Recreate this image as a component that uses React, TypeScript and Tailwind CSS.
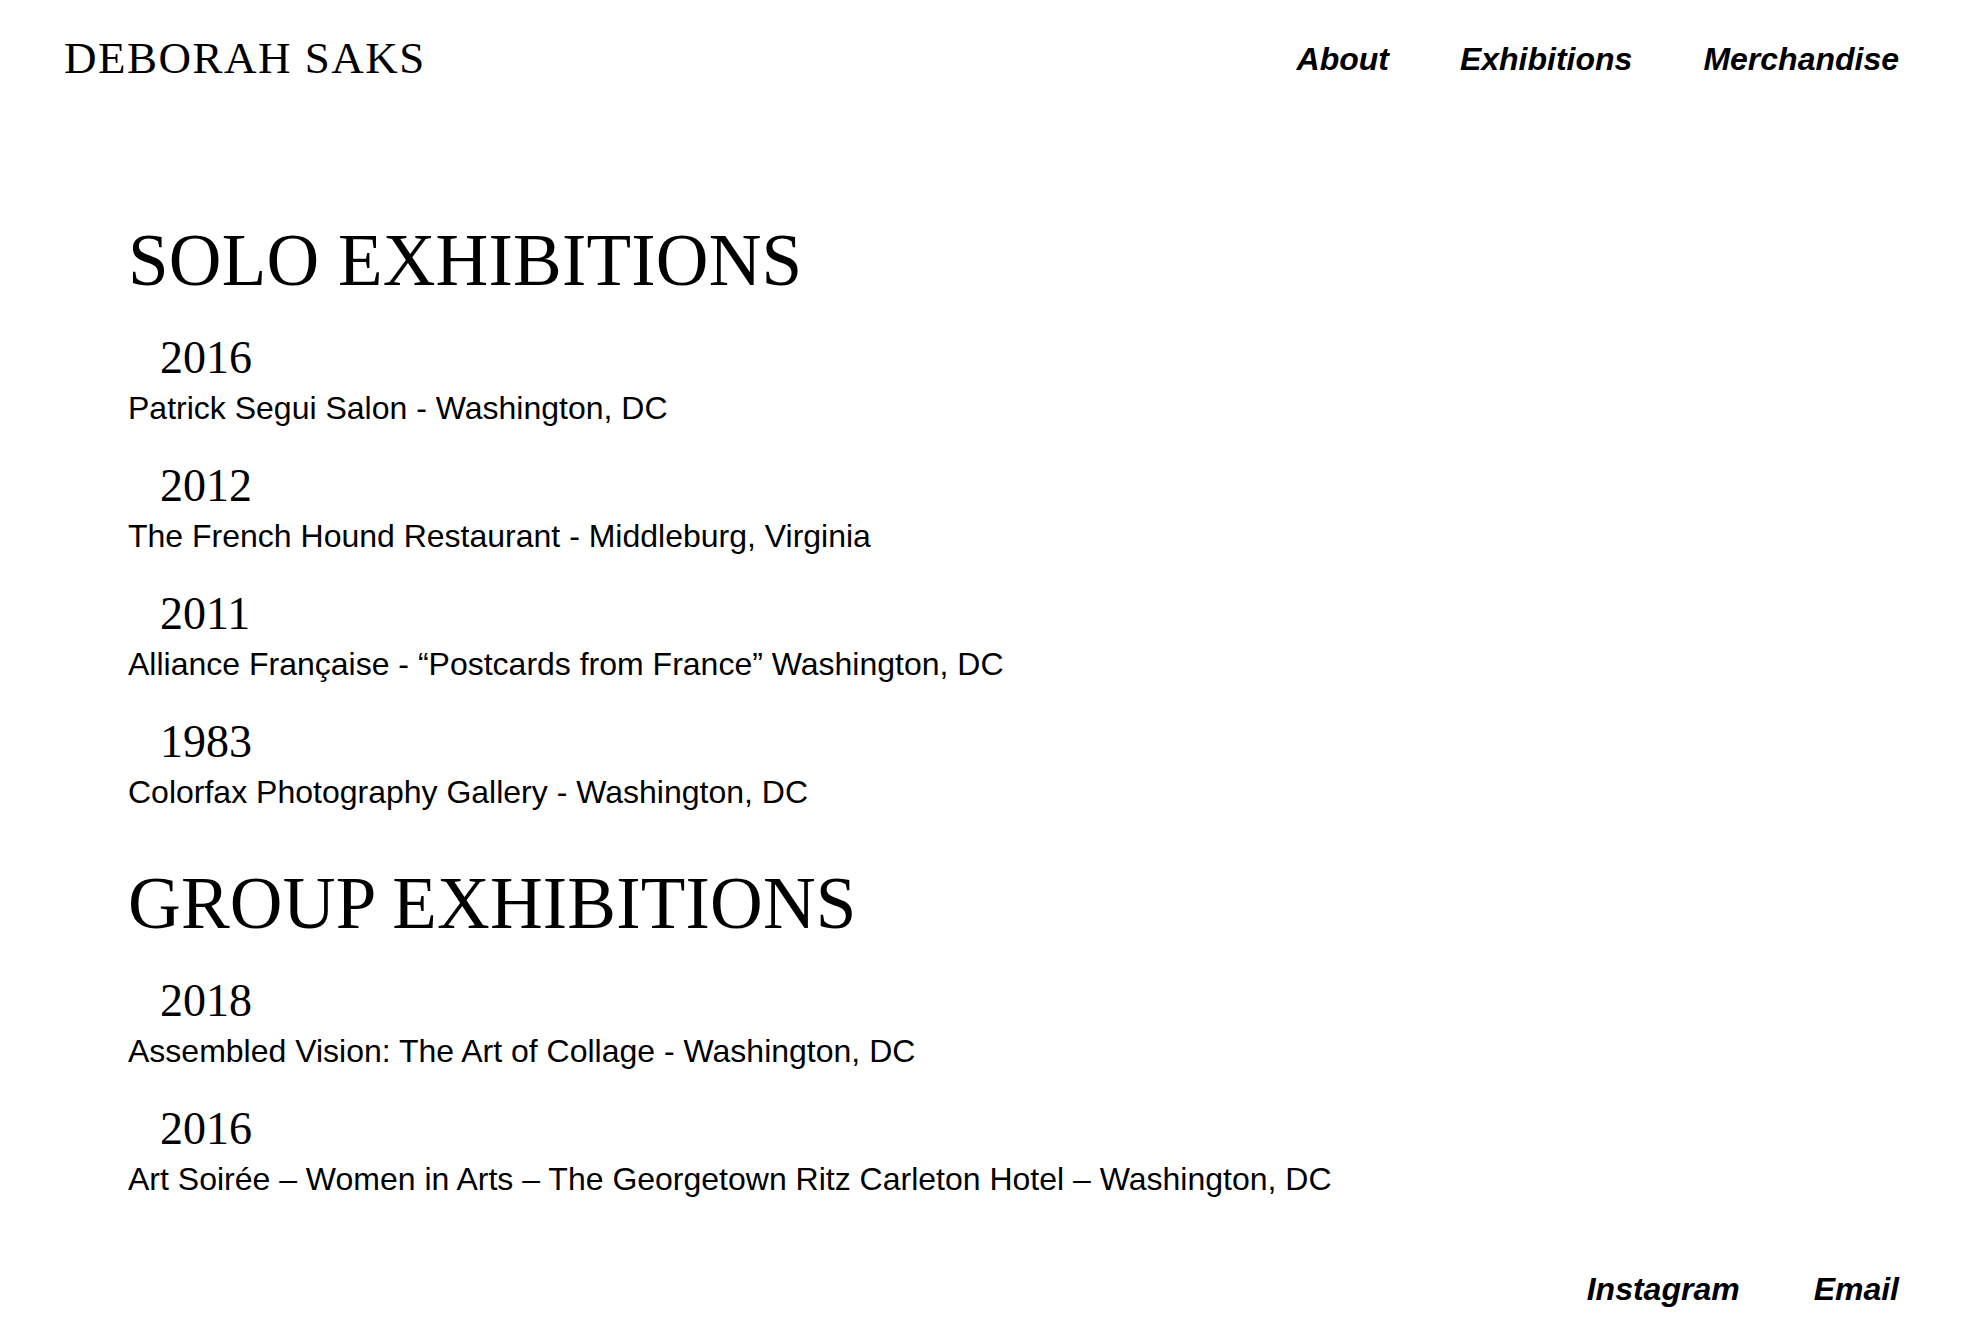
const solo = [
  { year: '2016', text: 'Patrick Segui Salon - Washington, DC' },
  { year: '2012', text: 'The French Hound Restaurant - Middleburg, Virginia' },
  { year: '2011', text: 'Alliance Française - “Postcards from France” Washington, DC' },
  { year: '1983', text: 'Colorfax Photography Gallery - Washington, DC' },
];

const group = [
  { year: '2018', text: 'Assembled Vision: The Art of Collage - Washington, DC' },
  {
    year: '2016',
    text: 'Art Soirée – Women in Arts – The Georgetown Ritz Carleton Hotel – Washington, DC',
  },
];

function Section({ title, items }: { title: string; items: { year: string; text: string }[] }) {
  return (
    <section>
      <h2 className="font-['Liberation_Serif','Times_New_Roman',serif] text-[73px] leading-[80px] tracking-[0.2px] text-black">
        {title}
      </h2>
      <div className="mt-[31px] flex flex-col gap-[28px]">
        {items.map((it, i) => (
          <div key={i}>
            <div className="pl-[32px] font-['Liberation_Serif','Times_New_Roman',serif] text-[46px] leading-[52px] text-black">
              {it.year}
            </div>
            <div className="font-['Liberation_Sans',Arial,sans-serif] text-[32px] leading-[48px] text-black">
              {it.text}
            </div>
          </div>
        ))}
      </div>
    </section>
  );
}

export default function App() {
  return (
    <div className="min-h-screen bg-white flex flex-col text-black">
      <header className="flex items-start justify-between pl-[64px] pr-[64px] pt-[36px]">
        <div className="font-['Liberation_Serif','Times_New_Roman',serif] text-[45px] leading-[45px] tracking-[1.5px]">
          DEBORAH SAKS
        </div>
        <nav className="mt-[3px] flex gap-[71px] font-['Liberation_Sans',Arial,sans-serif] text-[32px] leading-[40px] font-bold italic">
          <a href="#">About</a>
          <a href="#">Exhibitions</a>
          <a href="#">Merchandise</a>
        </nav>
      </header>

      <main className="pl-[128px] pt-[140px] flex flex-col gap-[48px]">
        <Section title="SOLO EXHIBITIONS" items={solo} />
        <Section title="GROUP EXHIBITIONS" items={group} />
      </main>

      <footer className="mt-auto flex justify-end gap-[74px] pr-[64px] pb-[23px] font-['Liberation_Sans',Arial,sans-serif] text-[32px] leading-[40px] font-bold italic">
        <a href="#">Instagram</a>
        <a href="#">Email</a>
      </footer>
    </div>
  );
}
